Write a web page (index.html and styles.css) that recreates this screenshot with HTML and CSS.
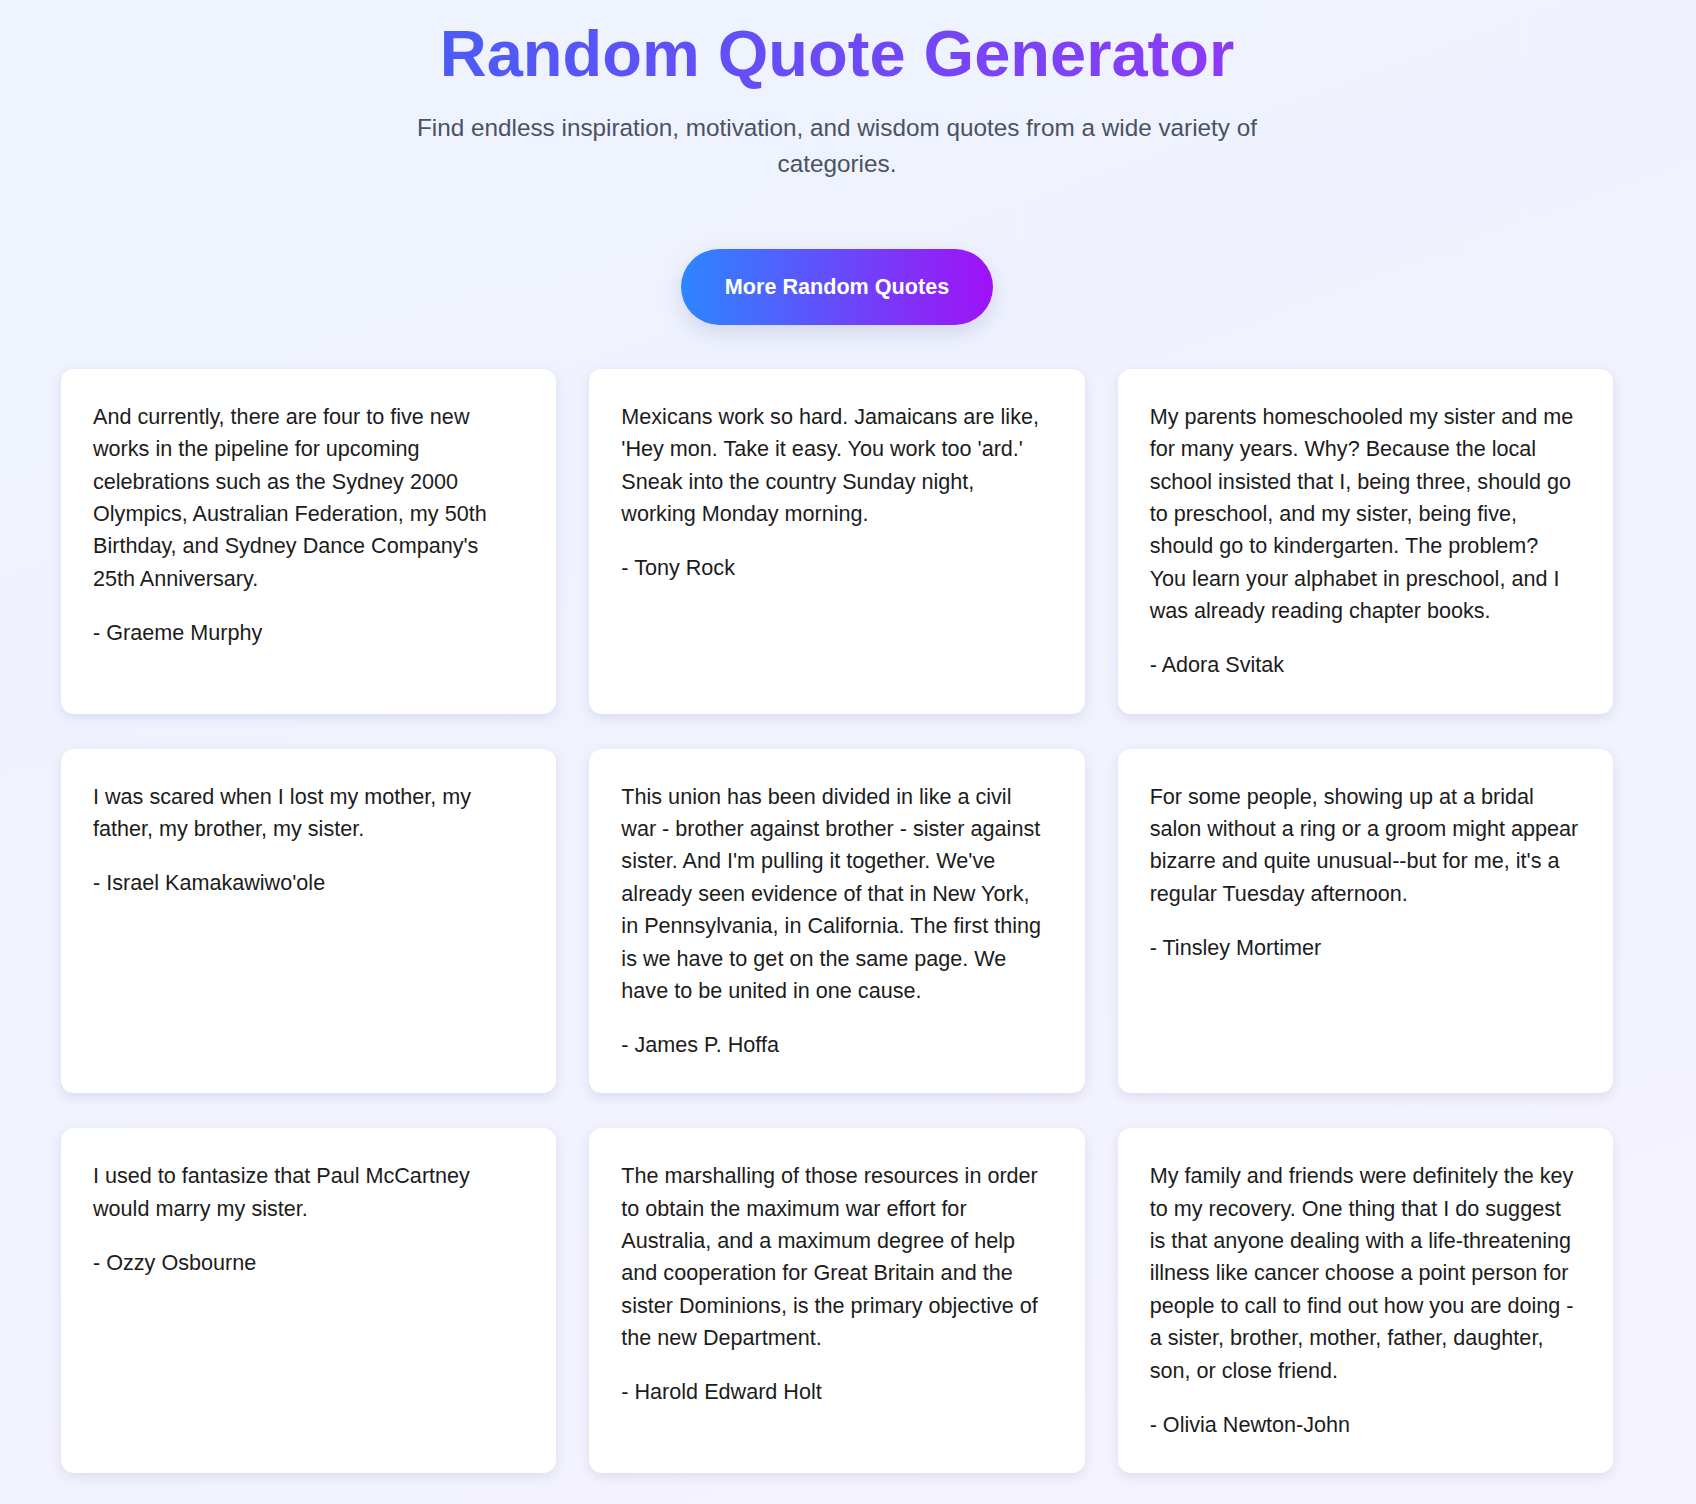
FILE: index.html
```html
<!DOCTYPE html>
<html lang="en">
<head>
  <meta charset="UTF-8" />
  <meta name="viewport" content="width=device-width, initial-scale=1.0" />
  <title>Random Quote Generator</title>
  <link rel="stylesheet" href="styles.css">
</head>
<body>

  <!-- Header -->
  <header class="header">
    <h1 class="title">Random Quote Generator</h1>
    <p class="subtitle">Find endless inspiration, motivation, and wisdom quotes from a wide variety of categories.</p>
    <button class="more-btn" type="button">More Random Quotes</button>
  </header>

  <!-- Quotes -->
  <main class="quotes">
    <div class="quote-card">
      <p class="quote-text">And currently, there are four to five new works in the pipeline for upcoming celebrations such as the Sydney 2000 Olympics, Australian Federation, my 50th Birthday, and Sydney Dance Company's 25th Anniversary.</p>
      <p class="quote-author">- Graeme Murphy</p>
    </div>
    <div class="quote-card">
      <p class="quote-text">Mexicans work so hard. Jamaicans are like, 'Hey mon. Take it easy. You work too 'ard.' Sneak into the country Sunday night, working Monday morning.</p>
      <p class="quote-author">- Tony Rock</p>
    </div>
    <div class="quote-card">
      <p class="quote-text">My parents homeschooled my sister and me for many years. Why? Because the local school insisted that I, being three, should go to preschool, and my sister, being five, should go to kindergarten. The problem? You learn your alphabet in preschool, and I was already reading chapter books.</p>
      <p class="quote-author">- Adora Svitak</p>
    </div>
    <div class="quote-card">
      <p class="quote-text">I was scared when I lost my mother, my father, my brother, my sister.</p>
      <p class="quote-author">- Israel Kamakawiwo'ole</p>
    </div>
    <div class="quote-card">
      <p class="quote-text">This union has been divided in like a civil war - brother against brother - sister against sister. And I'm pulling it together. We've already seen evidence of that in New York, in Pennsylvania, in California. The first thing is we have to get on the same page. We have to be united in one cause.</p>
      <p class="quote-author">- James P. Hoffa</p>
    </div>
    <div class="quote-card">
      <p class="quote-text">For some people, showing up at a bridal salon without a ring or a groom might appear bizarre and quite unusual--but for me, it's a regular Tuesday afternoon.</p>
      <p class="quote-author">- Tinsley Mortimer</p>
    </div>
    <div class="quote-card">
      <p class="quote-text">I used to fantasize that Paul McCartney would marry my sister.</p>
      <p class="quote-author">- Ozzy Osbourne</p>
    </div>
    <div class="quote-card">
      <p class="quote-text">The marshalling of those resources in order to obtain the maximum war effort for Australia, and a maximum degree of help and cooperation for Great Britain and the sister Dominions, is the primary objective of the new Department.</p>
      <p class="quote-author">- Harold Edward Holt</p>
    </div>
    <div class="quote-card">
      <p class="quote-text">My family and friends were definitely the key to my recovery. One thing that I do suggest is that anyone dealing with a life-threatening illness like cancer choose a point person for people to call to find out how you are doing - a sister, brother, mother, father, daughter, son, or close friend.</p>
      <p class="quote-author">- Olivia Newton-John</p>
    </div>
  </main>

</body>
</html>
```

FILE: styles.css
```css
body {
  margin: 0;
  padding: 16px 83px 40px 61px;
  min-height: 100vh;
  box-sizing: border-box;
  font-family: "Liberation Sans", Arial, sans-serif;
  color: #1c1c1c;
  background: linear-gradient(160deg, #eef3fe 0%, #f0f2fe 50%, #f5f3fe 100%);
}

.header {
  text-align: center;
}

.title {
  display: inline-block;
  margin: 0;
  font-size: 65px;
  font-weight: bold;
  background: linear-gradient(90deg, #4c5bf6, #8c3af6);
  -webkit-background-clip: text;
  background-clip: text;
  color: transparent;
}

.subtitle {
  max-width: 900px;
  margin: 19px auto 0;
  font-size: 24.3px;
  line-height: 1.5;
  color: #4b5262;
}

.more-btn {
  margin-top: 66px;
  padding: 25px 44px;
  border: none;
  border-radius: 40px;
  font-family: inherit;
  font-size: 21.6px;
  font-weight: bold;
  color: #fff;
  background: linear-gradient(90deg, #2c86ff, #a011f6);
  box-shadow: 0 8px 22px rgba(80, 80, 140, 0.18);
  cursor: pointer;
}

/* Quote cards */
.quotes {
  display: grid;
  grid-template-columns: repeat(3, 1fr);
  gap: 35px 33px;
  margin-top: 44px;
}

.quote-card {
  padding: 32px 34px 32px 32px;
  background: #fff;
  border-radius: 13px;
  box-shadow: 0 4px 12px rgba(40, 40, 90, 0.1);
}

.quote-text,
.quote-author {
  margin: 0;
  font-size: 21.6px;
  line-height: 1.5;
}

.quote-text {
  margin-bottom: 21.6px;
}
```
